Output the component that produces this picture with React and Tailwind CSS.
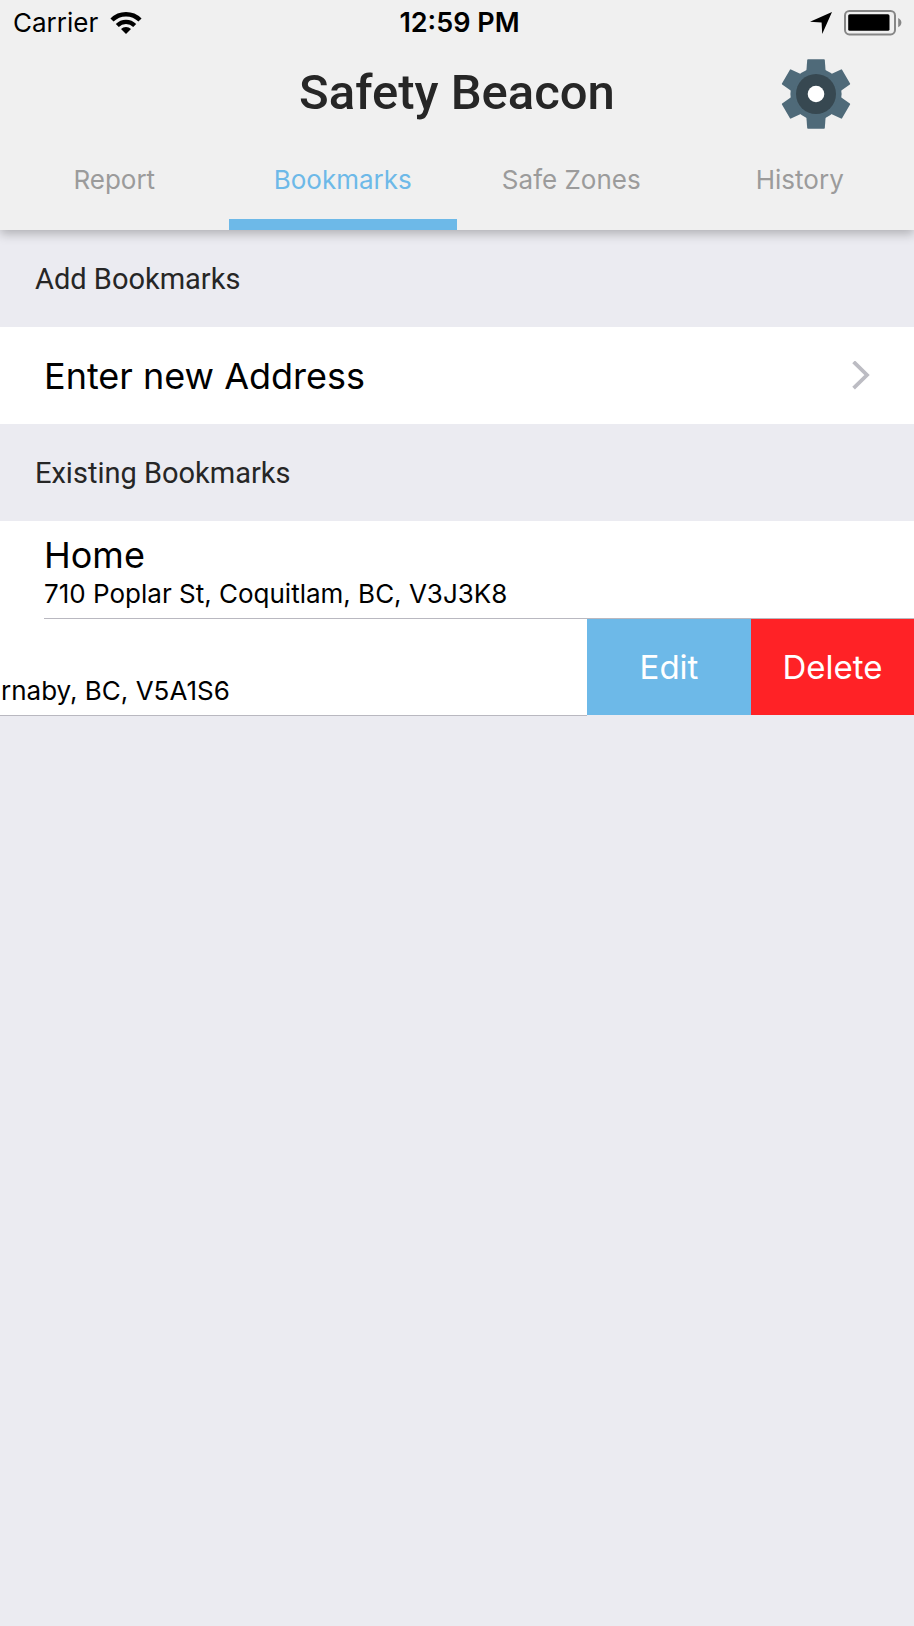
const TABS = ["Report", "Bookmarks", "Safe Zones", "History"];

function WifiIcon() {
  return (
    <svg width="32" height="22" viewBox="0 0 32 22" aria-hidden="true">
      <path d="M2 8 A 19.8 19.8 0 0 1 30 8" fill="none" stroke="#000" strokeWidth="4.4" />
      <path d="M7.3 13.5 A 12.2 12.2 0 0 1 24.7 13.5" fill="none" stroke="#000" strokeWidth="4.2" />
      <path d="M11 17 A 7 7 0 0 1 21 17 L16 22 Z" fill="#000" />
    </svg>
  );
}

function LocationIcon() {
  return (
    <svg width="22" height="22" viewBox="0 0 22 22" aria-hidden="true">
      <path d="M0 9.8 L22 0 L12.2 22 L11.6 10.4 Z" fill="#000" />
    </svg>
  );
}

function BatteryIcon() {
  return (
    <svg width="58" height="26" viewBox="0 0 58 26" aria-hidden="true">
      <rect x="1" y="1" width="50" height="23.4" rx="4.4" fill="none" stroke="#868686" strokeWidth="2" />
      <rect x="4.2" y="4.2" width="41.3" height="16.6" rx="1.6" fill="#000" />
      <path d="M54.2 8 Q57.4 9.6 57.4 12.6 Q57.4 15.6 54.2 17.2 Z" fill="#868686" />
    </svg>
  );
}

function GearIcon() {
  return (
    <svg width="70" height="70" viewBox="-35 -35 70 70" aria-hidden="true">
      <g fill="#4f6a79">
        <circle r="25.6" />
        {[0, 60, 120, 180, 240, 300].map((angle) => (
          <path
            key={angle}
            transform={`rotate(${angle})`}
            d="M-9.7 -22 L-8.8 -34 Q-8.7 -34.7 -8 -34.7 H8 Q8.7 -34.7 8.8 -34 L9.7 -22 Z"
          />
        ))}
      </g>
      <circle r="20" fill="#374851" />
      <circle r="8.3" fill="#fff" />
    </svg>
  );
}

function ChevronIcon() {
  return (
    <svg width="18" height="30" viewBox="0 0 18 30" aria-hidden="true">
      <path d="M1.6 0.8 L15 14 L1.6 27.2" fill="none" stroke="#bcbcc3" strokeWidth="3.8" />
    </svg>
  );
}

function SectionHeader({ children }) {
  return (
    <h2 className="flex h-[97px] items-center px-[35px] font-[Roboto,sans-serif] text-[29px] leading-8 text-[#262626]">
      {children}
    </h2>
  );
}

export default function App() {
  return (
    <div className="min-h-screen overflow-x-hidden bg-[#ebebf1] font-[Inter,sans-serif] text-black">
      <header className="relative bg-[#f0f0f0] shadow-[0_4px_10px_rgba(0,0,0,0.25)]">
        <div className="grid h-[46px] grid-cols-3 items-center pr-3 pl-[13px] text-[26px] leading-8">
          <div className="flex items-center gap-3">
            <span>Carrier</span>
            <WifiIcon />
          </div>
          <time className="pl-1 text-center text-[27px] font-semibold">12:59 PM</time>
          <div className="flex items-center justify-end gap-3">
            <LocationIcon />
            <BatteryIcon />
          </div>
        </div>
        <div className="grid h-24 grid-cols-4 items-center">
          <h1 className="col-span-2 col-start-2 pb-0.5 text-center font-[Roboto,sans-serif] text-[49px] leading-[56px] font-medium text-[#262626]">
            Safety Beacon
          </h1>
          <button type="button" aria-label="Settings" className="ml-8 justify-self-center">
            <GearIcon />
          </button>
        </div>
        <nav className="grid h-[88px] grid-cols-4">
          {TABS.map((tab) => (
            <a
              key={tab}
              href="#"
              className={
                tab === "Bookmarks"
                  ? "border-b-[11px] border-[#6db9e8] pt-[22px] text-center text-[26px] leading-8 text-[#6db9e8]"
                  : "border-b-[11px] border-transparent pt-[22px] text-center text-[26px] leading-8 text-[#9b9b9b]"
              }
            >
              {tab}
            </a>
          ))}
        </nav>
      </header>

      <main>
        <SectionHeader>Add Bookmarks</SectionHeader>
        <button type="button" className="flex h-[97px] w-full items-center justify-between bg-white px-11 text-left text-[36px] leading-10">
          <span>Enter new Address</span>
          <ChevronIcon />
        </button>

        <SectionHeader>Existing Bookmarks</SectionHeader>
        <ul>
          <li className="bg-white pl-11">
            <div className="flex h-[98px] flex-col justify-end border-b border-[#b9b8c0] pb-2">
              <p className="text-[36px] leading-[46px]">Home</p>
              <p className="text-[26px] leading-8">710 Poplar St, Coquitlam, BC, V3J3K8</p>
            </div>
          </li>
          <li className="flex h-[97px]">
            <div className="flex flex-1 items-end border-b border-[#b9b8c0] bg-white pb-2 pl-px">
              <p className="text-[26px] leading-8">rnaby, BC, V5A1S6</p>
            </div>
            <div className="mb-px flex text-[33px] leading-10 text-white">
              <button type="button" className="w-[164px] bg-[#6db9e8]">Edit</button>
              <button type="button" className="w-[163px] bg-[#ff2226]">Delete</button>
            </div>
          </li>
        </ul>
      </main>
    </div>
  );
}
